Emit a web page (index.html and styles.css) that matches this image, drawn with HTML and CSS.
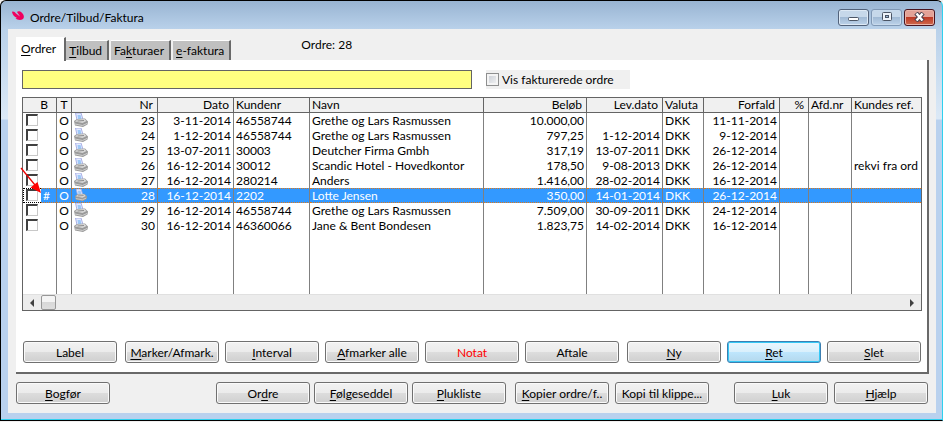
FILE: index.html
```html
<!DOCTYPE html>
<html lang="da">
<head>
    <meta charset="UTF-8">
    <meta name="viewport" content="width=device-width, initial-scale=1.0">
    <title>Ordre/Tilbud/Faktura</title>
    <link rel="stylesheet" href="styles.css">
</head>
<body>
    <svg class="symbols" aria-hidden="true">
        <symbol id="printer" viewBox="0 0 14 15">
            <path d="M1.500 0 L7 0 L9 6.500 L3 7 Z" fill="#e4ebff" stroke="#a9b0e6"/>
            <path d="M3.500 2 L6.500 2 L7.500 6 L4 6 Z" fill="#9cc8f8"/>
            <path d="M0 8 L3 6 L11 5.500 L14 8.500 L13.500 11.500 L9 14 L1 12.500 Z" fill="#9a9a9a"/>
            <path d="M1 8.500 L3.500 6.500 L10.500 6 L12.500 8 L8.500 10 Z" fill="#d8d8d8"/>
            <path d="M1 11 L8.500 12.500 L13 10.500" fill="none" stroke="#cfcfcf"/>
            <path d="M3.500 8 L10 7.500" stroke="#8c8c8c"/>
        </symbol>
    </svg>

    <div class="window">
        <header class="titlebar">
            <svg class="logo" viewBox="0 0 12 9" aria-hidden="true">
                <path d="M0 1 C1 0 3 1 4 2.500 L8 5.500 L5 1 C6 -.5 9 0 10 2 C12 3.500 12.500 6.500 11 8 C9 9.500 5 9 3.500 7.500 L5 7 C2.500 6 .5 4 0 1 Z" fill="#f0005f"/>
            </svg>
            <h1>Ordre/Tilbud/Faktura</h1>
            <div class="controls">
                <button class="control" type="button" aria-label="Minimer">
                    <svg viewBox="0 0 13 10"><rect x="1.500" y="5.500" width="10" height="3" rx="1" fill="#fff" stroke="#4b5565"/></svg>
                </button>
                <button class="control dimmed" type="button" aria-label="Maksimer">
                    <svg viewBox="0 0 13 10"><rect x="2.500" y=".5" width="9" height="8" rx="1" fill="#eef3f9" stroke="#4b5565"/><rect x="5.500" y="3.500" width="3" height="2" fill="#9db9d6" stroke="#4b5565"/></svg>
                </button>
                <button class="control close" type="button" aria-label="Luk vindue">
                    <svg viewBox="0 0 13 10"><path d="M3 1 L10 9 M10 1 L3 9" stroke="#4d4450" stroke-width="4.500"/><path d="M3.500 1.500 L9.500 8.500 M9.500 1.500 L3.500 8.500" stroke="#fff" stroke-width="2.400"/></svg>
                </button>
            </div>
        </header>

        <main class="client">
            <div class="top">
                <nav class="tabs">
                    <button class="tab active" type="button"><u>O</u>rdrer</button>
                    <button class="tab" type="button"><u>T</u>ilbud</button>
                    <button class="tab" type="button">Fa<u>k</u>turaer</button>
                    <button class="tab" type="button"><u>e</u>-faktura</button>
                </nav>
                <p class="current">Ordre: 28</p>
            </div>

            <section class="panel">
                <div class="filter">
                    <input class="search" type="text" aria-label="Søg">
                    <label class="show-invoiced"><input type="checkbox"> Vis fakturerede ordre</label>
                </div>

                <div class="grid">
                    <table>
                        <colgroup>
                            <col class="c-mark"><col class="c-type"><col class="c-nr"><col class="c-date"><col class="c-date"><col class="c-name"><col class="c-amount"><col class="c-date"><col class="c-currency"><col class="c-date"><col class="c-percent"><col class="c-dept"><col>
                        </colgroup>
                        <thead>
                            <tr>
                                <th class="mark">B</th><th class="mid">T</th><th class="num">Nr</th><th class="num">Dato</th><th>Kundenr</th><th>Navn</th><th class="num">Beløb</th><th class="num">Lev.dato</th><th>Valuta</th><th class="num">Forfald</th><th class="num">%</th><th>Afd.nr</th><th>Kundes ref.</th>
                            </tr>
                        </thead>
                        <tbody id="orders"></tbody>
                    </table>
                    <div class="scrollbar">
                        <button type="button" aria-label="Rul til venstre"><svg viewBox="0 0 4 8"><path d="M4 0 L0 4 L4 8 Z"/></svg></button>
                        <span class="thumb"></span>
                        <button class="right" type="button" aria-label="Rul til højre"><svg viewBox="0 0 4 8"><path d="M0 0 L4 4 L0 8 Z"/></svg></button>
                    </div>
                    <svg class="arrow" viewBox="0 0 22 27" aria-hidden="true">
                        <path d="M1 1 L15 18" stroke="#e00" stroke-width="1.300"/>
                        <path d="M21 26 L10.500 20.500 L17.500 15 Z" fill="#f00"/>
                    </svg>
                </div>

                <div class="actions">
                    <button class="btn" type="button">Label</button>
                    <div class="group">
                        <button class="btn" type="button"><u>M</u>arker/Afmark.</button>
                        <button class="btn" type="button"><u>I</u>nterval</button>
                        <button class="btn" type="button"><u>A</u>fmarker alle</button>
                        <button class="btn note" type="button">Notat</button>
                        <button class="btn" type="button">Aftale</button>
                    </div>
                    <div class="group end">
                        <button class="btn" type="button"><u>N</u>y</button>
                        <button class="btn primary" type="button"><u>R</u>et</button>
                        <button class="btn" type="button"><u>S</u>let</button>
                    </div>
                </div>
            </section>

            <footer class="footer">
                <button class="btn" type="button"><u>B</u>ogfør</button>
                <div class="group print">
                    <button class="btn" type="button">Or<u>d</u>re</button>
                    <button class="btn" type="button"><u>F</u>ølgeseddel</button>
                    <button class="btn" type="button"><u>P</u>lukliste</button>
                </div>
                <div class="group">
                    <button class="btn" type="button"><u>K</u>opier ordre/f..</button>
                    <button class="btn" type="button">Kopi til klippe...</button>
                </div>
                <div class="group end">
                    <button class="btn" type="button"><u>L</u>uk</button>
                    <button class="btn" type="button"><u>H</u>jælp</button>
                </div>
            </footer>
        </main>
    </div>

    <script>
        const orders = [
            { nr: 23, date: "3-11-2014", customer: "46558744", name: "Grethe og Lars Rasmussen", amount: "10.000,00", delivery: "", due: "11-11-2014", ref: "" },
            { nr: 24, date: "1-12-2014", customer: "46558744", name: "Grethe og Lars Rasmussen", amount: "797,25", delivery: "1-12-2014", due: "9-12-2014", ref: "" },
            { nr: 25, date: "13-07-2011", customer: "30003", name: "Deutcher Firma Gmbh", amount: "317,19", delivery: "13-07-2011", due: "26-12-2014", ref: "" },
            { nr: 26, date: "16-12-2014", customer: "30012", name: "Scandic Hotel - Hovedkontor", amount: "178,50", delivery: "9-08-2013", due: "26-12-2014", ref: "rekvi fra ord" },
            { nr: 27, date: "16-12-2014", customer: "280214", name: "Anders", amount: "1.416,00", delivery: "28-02-2014", due: "16-12-2014", ref: "" },
            { nr: 28, date: "16-12-2014", customer: "2202", name: "Lotte Jensen", amount: "350,00", delivery: "14-01-2014", due: "26-12-2014", ref: "", selected: true },
            { nr: 29, date: "16-12-2014", customer: "46558744", name: "Grethe og Lars Rasmussen", amount: "7.509,00", delivery: "30-09-2011", due: "24-12-2014", ref: "" },
            { nr: 30, date: "16-12-2014", customer: "46360066", name: "Jane & Bent Bondesen", amount: "1.823,75", delivery: "14-02-2014", due: "16-12-2014", ref: "" }
        ];

        const rows = orders.map(o => `
            <tr class="${o.selected ? "selected" : ""}">
                <td class="mark"><div class="mark-cell"><span class="box"><input type="checkbox" aria-label="Marker ordre ${o.nr}"></span><span class="flag">${o.selected ? "#" : ""}</span></div></td>
                <td class="mid">O</td>
                <td><div class="nr-cell"><svg class="printer"><use href="#printer"/></svg>${o.nr}</div></td>
                <td class="num">${o.date}</td>
                <td>${o.customer}</td>
                <td>${o.name.replace("&", "&amp;")}</td>
                <td class="num">${o.amount}</td>
                <td class="num">${o.delivery}</td>
                <td>DKK</td>
                <td class="num">${o.due}</td>
                <td></td>
                <td></td>
                <td>${o.ref}</td>
            </tr>`);

        // Empty row carries the column lines down to the scrollbar
        rows.push(`<tr class="filler">${"<td></td>".repeat(13)}</tr>`);

        document.getElementById("orders").innerHTML = rows.join("");
    </script>
</body>
</html>
```
FILE: styles.css
```css
* {
    margin: 0;
    padding: 0;
    box-sizing: border-box;
}

body {
    font-family: Lato, sans-serif;
    font-size: 12px;
    line-height: 15px;
    color: #000;
    background: #f0f0f0;
}

button,
input {
    font: inherit;
    color: inherit;
}

u {
    text-underline-offset: 2px;
}

.symbols {
    display: none;
}

/* Window frame */
.window {
    border: 1px solid #000;
    border-right-color: #2fd0ee;
    border-radius: 6px 6px 0 0;
    padding: 0 6px 7px 7px;
    background: linear-gradient(#98b4d2, #b9d1ea 28px, #dce9f6 118px, #b9d1ee 119px);
    box-shadow: inset 0 -1px #2fd0ee;
}

.titlebar {
    display: flex;
    align-items: center;
    height: 28px;
    padding: 0 1px 0 4px;
}

.logo {
    width: 12px;
    height: 9px;
    margin-right: 6px;
}

.titlebar h1 {
    font-size: 12px;
    font-weight: normal;
    padding-top: 4px;
}

.controls {
    display: flex;
    gap: 2px;
    margin-left: auto;
    padding-top: 4px;
}

.control {
    display: flex;
    align-items: center;
    justify-content: center;
    width: 31px;
    height: 17px;
    border: 1px solid #52627a;
    border-radius: 3px;
    background: linear-gradient(#c6d8ea 45%, #a1bad5 50%, #bdd3ea);
    box-shadow: inset 0 0 0 1px #dde9f5;
}

.control svg {
    width: 13px;
    height: 10px;
}

.control.dimmed {
    border-color: #8098b5;
    box-shadow: inset 0 0 0 1px #c8daec;
}

.control.close {
    border-color: #4a1520;
    background: linear-gradient(#e3a297 45%, #bd3a26 50%, #cf6a4e);
    box-shadow: inset 0 0 0 1px #eab3a8;
}

.client {
    background: #f0f0f0;
    padding: 8px 7px 9px 8px;
}

/* Tabs */
.top {
    display: flex;
    align-items: flex-start;
}

.tabs {
    display: flex;
    align-items: flex-end;
    gap: 2px;
    height: 23px;
}

.tab {
    height: 20px;
    padding: 0 5px 0 3px;
    border: 0;
    border-top: 1px solid #fff;
    border-right: 2px solid #696969;
    background: #c0c0c0;
}

.tab.active {
    height: 24px;
    margin: 0 -2px -1px 0;
    padding: 0 8px 2px 4px;
    border-left: 1px solid #fff;
    background: #fff;
}

.current {
    margin-left: 70px;
}

.panel {
    padding: 10px 5px 9px 6px;
    border-right: 2px solid #696969;
    border-bottom: 2px solid #696969;
    background: #fff;
}

/* Search line */
.filter {
    display: flex;
    gap: 14px;
    margin-bottom: 8px;
}

.search {
    width: 450px;
    height: 19px;
    padding: 0 3px;
    border: 1px solid #646464;
    background: #ffff80;
}

.show-invoiced {
    display: flex;
    align-items: center;
    gap: 3px;
    width: 144px;
    background: #f0f0f0;
}

.show-invoiced input {
    appearance: none;
    width: 13px;
    height: 13px;
    border: 1px solid #8e8f8f;
    background: linear-gradient(135deg, #c5cad2, #f6f6f6);
    box-shadow: inset 0 0 0 2px #f4f4f4;
}

/* Order list */
.grid {
    position: relative;
    border: 1px solid #646464;
}

.grid table {
    width: 100%;
    table-layout: fixed;
    border-collapse: separate;
    border-spacing: 0;
}

.c-mark { width: 34px; }
.c-type { width: 15px; }
.c-nr { width: 86px; }
.c-date { width: 76px; }
.c-name { width: 174px; }
.c-amount { width: 103px; }
.c-currency { width: 41px; }
.c-percent { width: 29px; }
.c-dept { width: 43px; }

.grid th,
.grid td {
    height: 15px;
    padding: 0 2px;
    border-right: 1px solid #808080;
    line-height: 15px;
    text-align: left;
    white-space: nowrap;
    overflow: hidden;
}

.grid th {
    padding: 0 4px 0 2px;
    border-right-color: #646464;
    border-bottom: 1px solid #646464;
    background: #f0f0f0;
    font-weight: normal;
    line-height: 14px;
}

.grid th:last-child,
.grid td:last-child {
    border-right: 0;
}

.grid .num {
    text-align: right;
}

.grid .mid {
    padding: 0;
    text-align: center;
}

.grid th.mark {
    padding-right: 8px;
    text-align: right;
}

.grid td.mark {
    padding: 0;
}

.mark-cell {
    display: flex;
}

.box {
    width: 18px;
    height: 15px;
    padding: 1px 3px;
    background: #fff;
}

.box input {
    display: block;
    appearance: none;
    width: 12px;
    height: 12px;
    border: 1px solid #c8c8c8;
    border-top: 2px solid #404040;
    border-left: 2px solid #404040;
    background: #fff;
}

.flag {
    flex: 1;
    padding-left: 2px;
}

.nr-cell {
    display: flex;
    justify-content: space-between;
}

.printer {
    width: 14px;
    height: 15px;
}

/* Focused row */
.grid .selected td,
.selected .flag {
    border-top: 1px dotted #e07818;
    border-bottom: 1px dotted #e07818;
    background: #3399ff;
    color: #fff;
    line-height: 13px;
}

.grid .selected .mark {
    border-top: 0;
    border-bottom: 0;
}

.selected .printer {
    height: 13px;
}

.selected .box {
    border: 1px dotted #000;
    border-right: 0;
    padding: 0 3px 0 2px;
}

.filler td {
    height: 61px;
}

.scrollbar {
    display: flex;
    align-items: center;
    height: 16px;
    border-top: 1px solid #e0e0e0;
    background: #ececec;
}

.scrollbar button {
    width: 18px;
    height: 15px;
    border: 0;
    background: none;
}

.scrollbar button svg {
    display: block;
    width: 4px;
    height: 8px;
    margin: 0 auto;
    fill: #404040;
}

.scrollbar .right {
    margin-left: auto;
}

.thumb {
    width: 15px;
    height: 15px;
    border: 1px solid #979797;
    border-radius: 2px;
    background: linear-gradient(#f4f4f4 45%, #d8d8d8 50%, #dedede);
}

/* Red pointer at the # flag */
.arrow {
    position: absolute;
    top: 69px;
    left: -3px;
    width: 22px;
    height: 27px;
}

/* Buttons */
.actions,
.footer,
.group {
    display: flex;
}

.actions {
    gap: 8px;
    margin-top: 30px;
    padding: 0 1px;
}

.footer {
    gap: 9px;
    margin-top: 8px;
    padding-right: 1px;
}

.group {
    gap: 6px;
}

.group.end {
    margin-left: auto;
}

.group.print {
    gap: 4px;
    margin-left: 97px;
}

.btn {
    width: 94px;
    height: 22px;
    border: 1px solid #707070;
    border-radius: 3px;
    background: linear-gradient(#f2f2f2, #ebebeb 50%, #dddddd 50%, #cfcfcf);
    box-shadow: inset 0 0 0 1px #fafafa;
    white-space: nowrap;
}

.btn.note {
    color: #f00;
}

.btn.primary {
    border-color: #3c7fb1;
    background: linear-gradient(#eaf6fd, #d9f0fc 50%, #bee6fd 50%, #b4d8ec);
    box-shadow: inset 0 0 0 1px #35c8f5;
}
```
